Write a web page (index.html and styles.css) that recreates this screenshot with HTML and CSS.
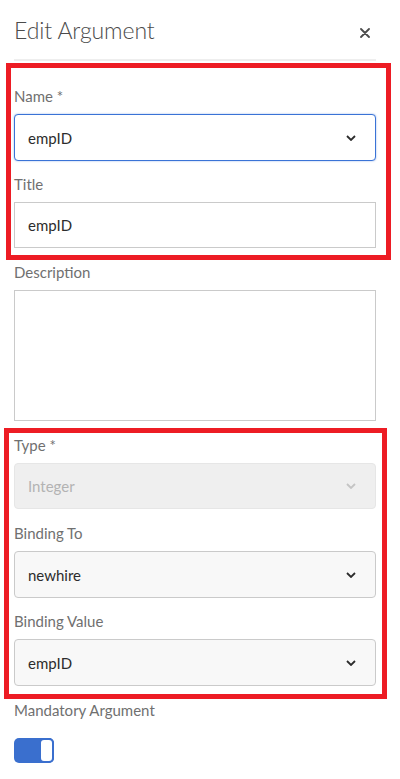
FILE: index.html
```html
<!DOCTYPE html>
<html lang="en">
<head>
<meta charset="utf-8">
<title>Edit Argument</title>
<link rel="stylesheet" href="styles.css">
</head>
<body>
<div class="panel">
  <div class="header">
    <h1 class="title">Edit Argument</h1>
    <button class="close" aria-label="Close">
      <svg width="10" height="10" viewBox="0 0 10 10"><path d="M1 1 L9 9 M9 1 L1 9" stroke="#4b4b4b" stroke-width="1.8" stroke-linecap="round" fill="none"/></svg>
    </button>
  </div>

  <div class="form">
    <div class="field first">
      <label class="label">Name *</label>
      <div class="select focused"><span>empID</span>
        <svg class="chev" width="10" height="6" viewBox="0 0 10 6"><path d="M1 1 L5 5 L9 1" stroke="#2c2c2c" stroke-width="1.8" fill="none"/></svg>
      </div>
    </div>
    <div class="field tight">
      <label class="label">Title</label>
      <div class="input"><span>empID</span></div>
    </div>
    <div class="field">
      <label class="label">Description</label>
      <div class="textarea"></div>
    </div>
    <div class="field">
      <label class="label">Type *</label>
      <div class="select disabled"><span>Integer</span>
        <svg class="chev" width="10" height="6" viewBox="0 0 10 6"><path d="M1 1 L5 5 L9 1" stroke="#c4c4c4" stroke-width="1.8" fill="none"/></svg>
      </div>
    </div>
    <div class="field">
      <label class="label">Binding To</label>
      <div class="select"><span>newhire</span>
        <svg class="chev" width="10" height="6" viewBox="0 0 10 6"><path d="M1 1 L5 5 L9 1" stroke="#2c2c2c" stroke-width="1.8" fill="none"/></svg>
      </div>
    </div>
    <div class="field tight">
      <label class="label">Binding Value</label>
      <div class="select"><span>empID</span>
        <svg class="chev" width="10" height="6" viewBox="0 0 10 6"><path d="M1 1 L5 5 L9 1" stroke="#2c2c2c" stroke-width="1.8" fill="none"/></svg>
      </div>
    </div>
    <div class="field">
      <label class="label toggle-label">Mandatory Argument</label>
      <div class="toggle"><span class="knob"></span></div>
    </div>
  </div>
</div>
<div class="annot annot-1"></div>
<div class="annot annot-2"></div>
</body>
</html>
```

FILE: styles.css
```css
* { box-sizing: border-box; }
html, body { margin: 0; padding: 0; background: #fff; }
body {
  font-family: Lato, "Open Sans", sans-serif;
  width: 400px;
  height: 779px;
  overflow: hidden;
  position: relative;
}
.panel { padding: 0 24px 0 14px; }
.header {
  display: flex;
  justify-content: space-between;
  align-items: flex-start;
  height: 61px;
  padding-top: 15px;
  border-bottom: 2px solid #eeeeee;
}
.title {
  margin: 0;
  font-size: 23px;
  line-height: 30px;
  font-weight: 300;
  color: #4b4b4b;
  letter-spacing: -0.1px;
}
.close {
  border: 0;
  background: none;
  padding: 0;
  margin: 13px 6px 0 0;
  width: 10px;
  height: 10px;
  display: block;
}
.close svg { display: block; }
.form { display: flex; flex-direction: column; }
.field { display: flex; flex-direction: column; }
.label {
  display: block;
  margin: 14px 0 8px;
  font-size: 15px;
  line-height: 20px;
  color: #707070;
}
.field.first .label { margin-top: 25px; }
.field.tight .label { margin-top: 13px; }
.select, .input {
  height: 46px;
  display: flex;
  align-items: center;
  justify-content: space-between;
  padding: 0 19px 0 13px;
  border: 1px solid #cacaca;
  font-size: 15px;
  color: #2c2c2c;
}
.select {
  background: #f8f8f8;
  border-radius: 4px;
  height: 47px;
}
.select.focused {
  background: #fff;
  border-color: #3a73d6;
  box-shadow: 0 0 2px rgba(58, 115, 214, 0.55);
}
.select.disabled {
  background: #efefef;
  border-color: #e6e6e6;
  color: #b3b3b3;
  height: 46px;
}
.input { background: #fff; }
.chev { display: block; }
.textarea {
  height: 131px;
  border: 1px solid #cacaca;
  background: #fff;
}
.toggle-label { margin-bottom: 18px; }
.toggle {
  width: 40px;
  height: 25px;
  border-radius: 5px;
  background: #3a6fce;
  position: relative;
}
.knob {
  position: absolute;
  right: 0;
  top: 0;
  width: 15px;
  height: 25px;
  background: #fff;
  border: 2px solid #3a6fce;
  border-radius: 5px;
}
.annot {
  position: absolute;
  border: 5px solid #ed1c24;
  pointer-events: none;
}
.annot-1 { left: 6px; top: 63px; width: 385px; height: 197px; }
.annot-2 { left: 4px; top: 428px; width: 383px; height: 271px; }
```
